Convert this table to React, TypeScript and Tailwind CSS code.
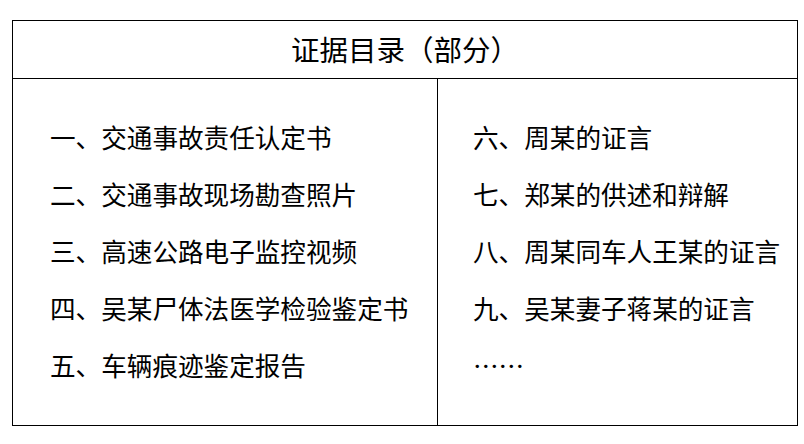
import React from 'react';

const leftItems = [
  '一、交通事故责任认定书',
  '二、交通事故现场勘查照片',
  '三、高速公路电子监控视频',
  '四、吴某尸体法医学检验鉴定书',
  '五、车辆痕迹鉴定报告',
];

const rightItems = [
  '六、周某的证言',
  '七、郑某的供述和辩解',
  '八、周某同车人王某的证言',
  '九、吴某妻子蒋某的证言',
  '……',
];

function ItemList({ items, className }: { items: string[]; className: string }) {
  return (
    <div className={className}>
      {items.map((item) => (
        <div key={item} className="h-[57px] leading-[57px] whitespace-nowrap">
          {item}
        </div>
      ))}
    </div>
  );
}

export default function App() {
  return (
    <div
      className="w-[804px] h-[444px] bg-white pt-[20px] pl-[12px] text-black"
      style={{ fontFamily: '"Noto Sans CJK SC", "Noto Sans", sans-serif' }}
    >
      <div className="w-[786px] border border-black">
        {/* Title row */}
        <div className="h-[58px] flex items-center justify-center border-b border-black text-[28.5px]">
          证据目录（部分）
        </div>

        {/* Two columns of evidence */}
        <div className="flex h-[346px] text-[25.6px]">
          <ItemList items={leftItems} className="w-[425px] border-r border-black pl-[37px] pt-[29px]" />
          <ItemList items={rightItems} className="flex-1 pl-[35px] pt-[29px]" />
        </div>
      </div>
    </div>
  );
}
